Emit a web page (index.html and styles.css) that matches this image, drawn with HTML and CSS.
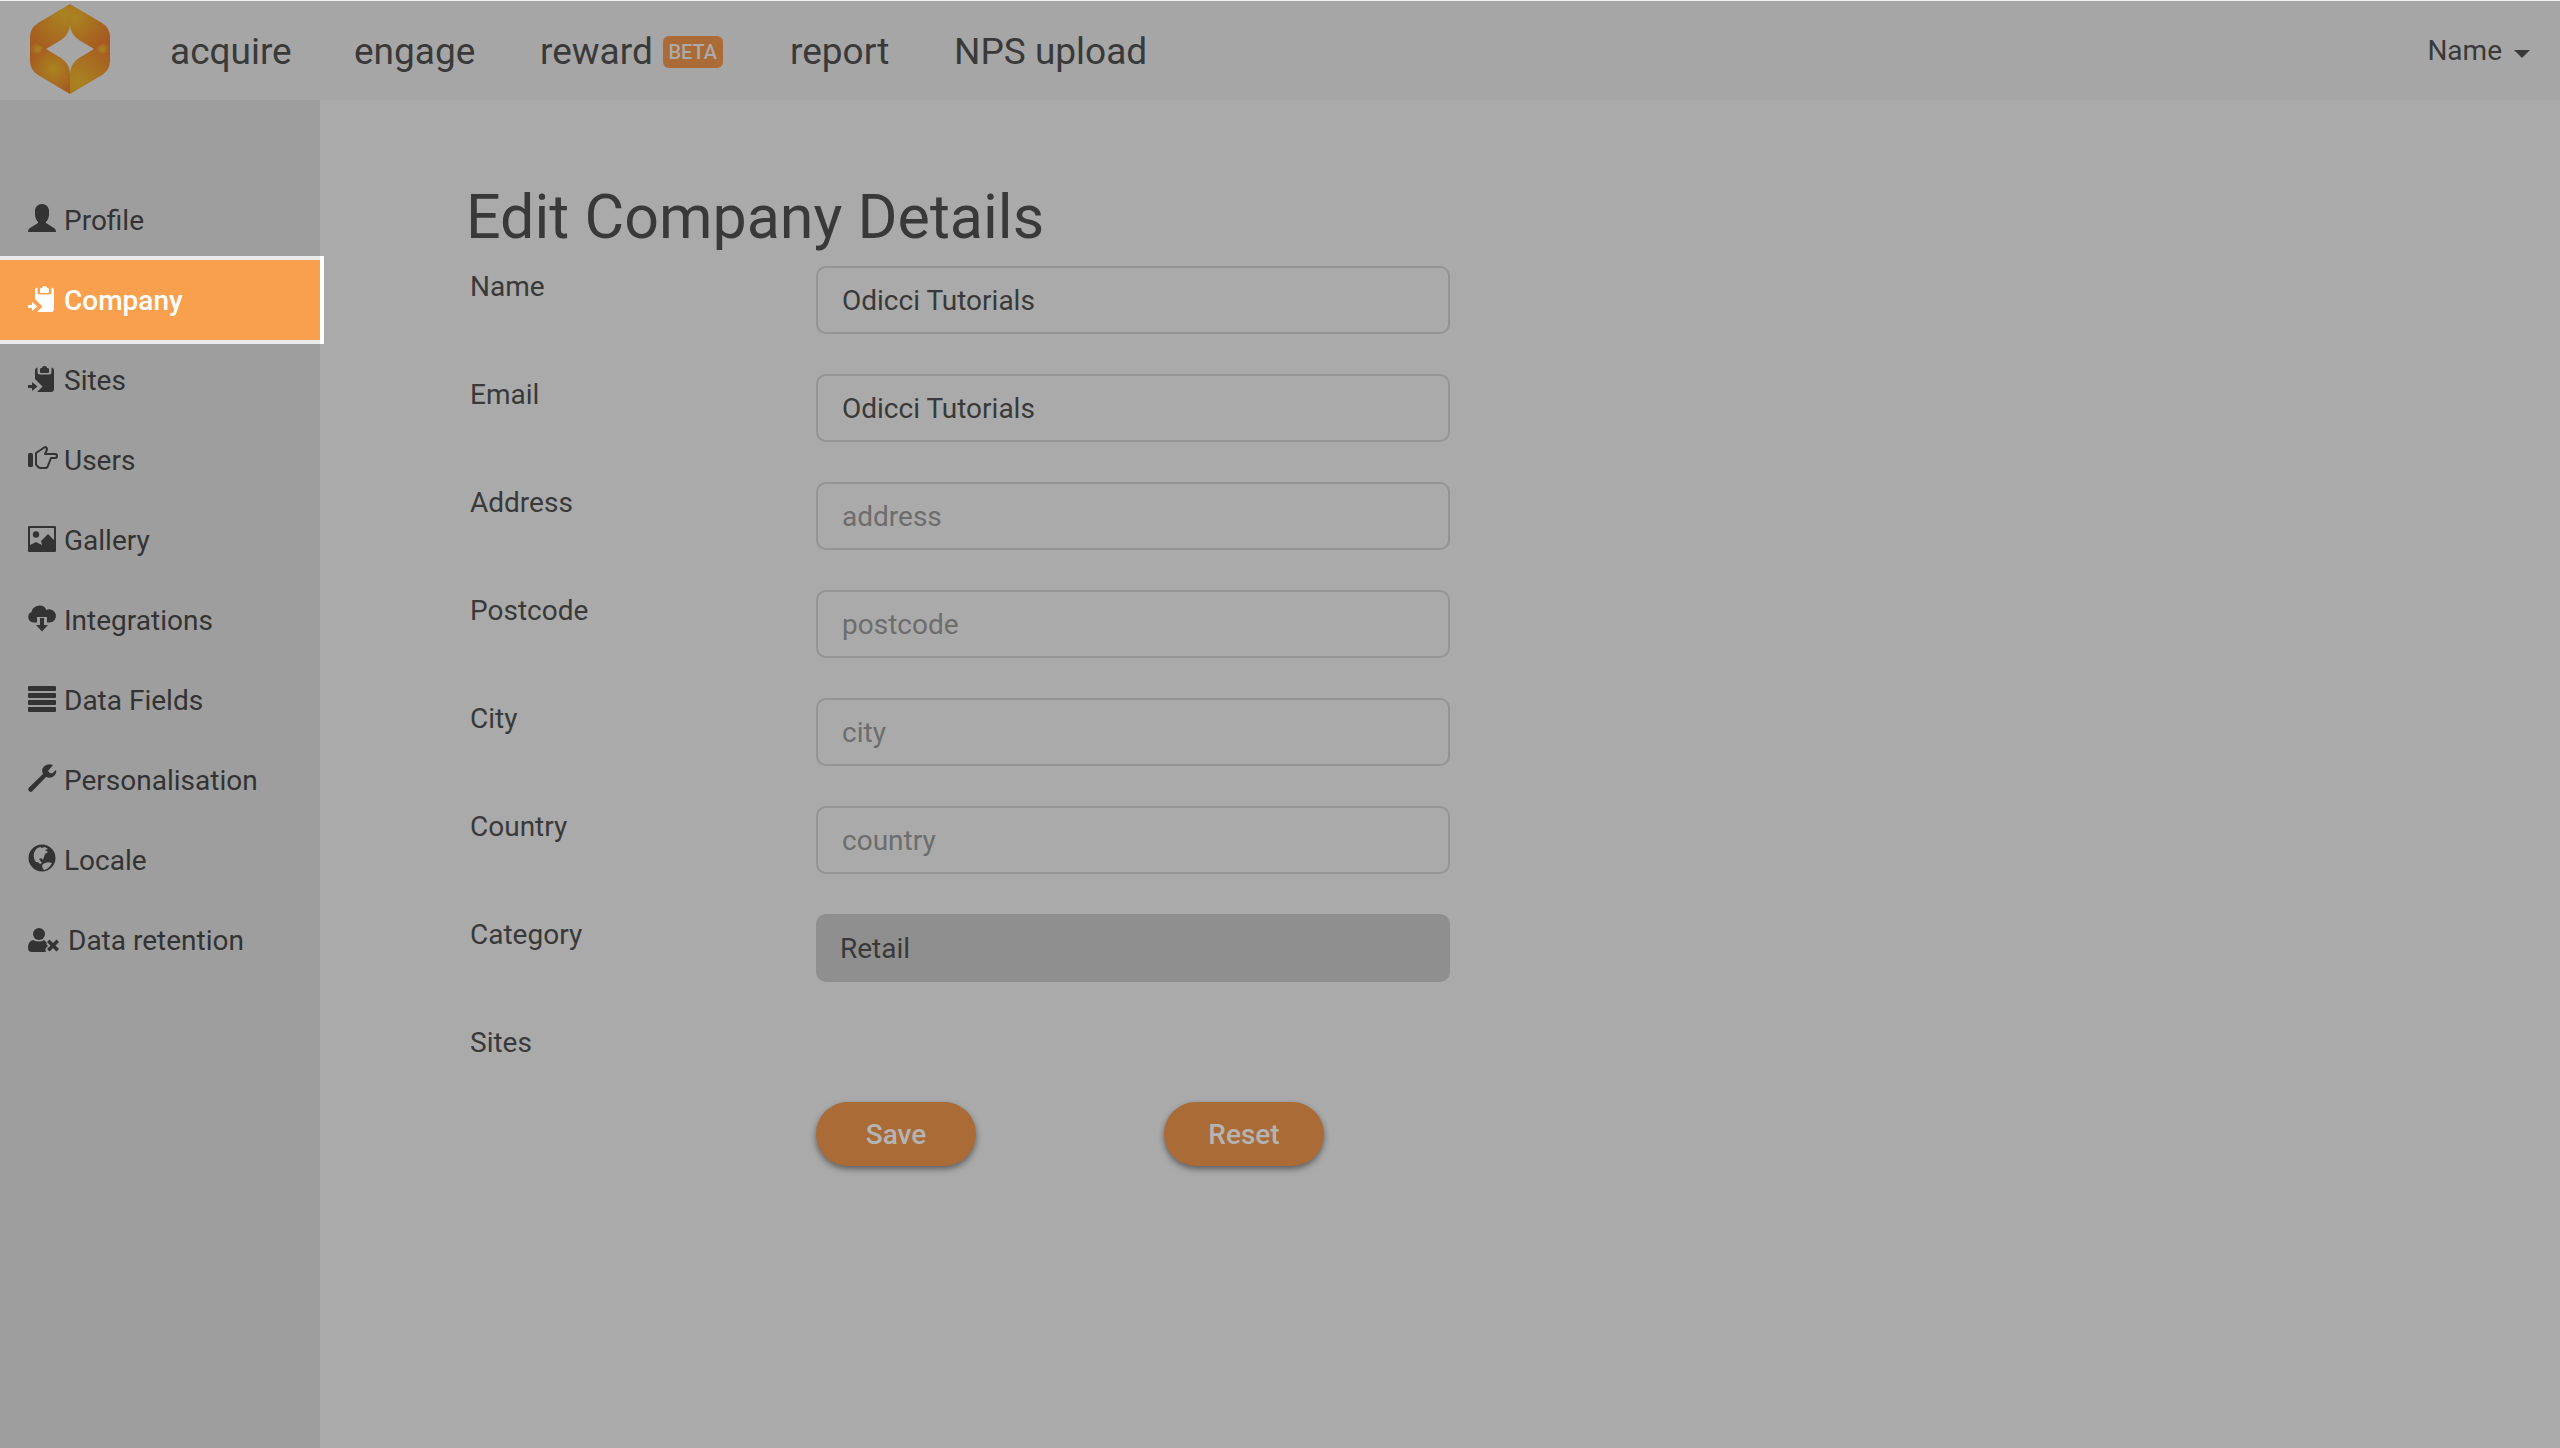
FILE: index.html
```html
<!DOCTYPE html>
<html lang="en">
<head>
<meta charset="utf-8">
<title>Edit Company Details</title>
<link rel="stylesheet" href="styles.css">
</head>
<body>
<header class="topbar">
  <a class="logo" href="#" aria-label="Home">
    <svg width="80" height="90" viewBox="0 0 80 90">
      <defs>
        <radialGradient id="g1" gradientUnits="userSpaceOnUse" cx="34" cy="11" r="42"><stop offset="0" stop-color="#a98420"/><stop offset="1" stop-color="#a65b21"/></radialGradient>
        <radialGradient id="g2" gradientUnits="userSpaceOnUse" cx="45" cy="13" r="42"><stop offset="0" stop-color="#a98420"/><stop offset="1" stop-color="#a65621"/></radialGradient>
        <radialGradient id="g3" gradientUnits="userSpaceOnUse" cx="23" cy="65" r="28"><stop offset="0" stop-color="#a98420"/><stop offset="1" stop-color="#a65621"/></radialGradient>
        <radialGradient id="g4" gradientUnits="userSpaceOnUse" cx="48" cy="78" r="50"><stop offset="0" stop-color="#a98420"/><stop offset="1" stop-color="#a65621"/></radialGradient>
        <radialGradient id="g5" gradientUnits="userSpaceOnUse" cx="8" cy="45" r="8"><stop offset="0" stop-color="#a98420"/><stop offset="1" stop-color="#a65621"/></radialGradient>
        <radialGradient id="g6" gradientUnits="userSpaceOnUse" cx="72" cy="45" r="8"><stop offset="0" stop-color="#a98420"/><stop offset="1" stop-color="#a65621"/></radialGradient>
      </defs>
      <path fill="url(#g1)" d="M40 0L8 19Q0 24 0 33V45H16L31 36Q40 30 40 20Z"/>
      <path fill="url(#g2)" d="M40 0L72 19Q80 24 80 33V45H64L49 36Q40 30 40 20Z"/>
      <path fill="url(#g3)" d="M40 90L8 71Q0 66 0 57V45H16L31 54Q40 60 40 70Z"/>
      <path fill="url(#g4)" d="M40 90L72 71Q80 66 80 57V45H64L49 54Q40 60 40 70Z"/>
      <path fill="url(#g5)" d="M0 39L6 39L16 45L6 51L0 51Z"/>
      <path fill="url(#g6)" d="M80 39L74 39L64 45L74 51L80 51Z"/>
    </svg>
  </a>
  <nav class="mainnav">
    <a href="#">acquire</a>
    <a href="#">engage</a>
    <a href="#">reward<span class="badge">BETA</span></a>
    <a href="#">report</a>
    <a href="#">NPS upload</a>
  </nav>
  <button class="account" type="button">Name<span class="caret"></span></button>
</header>
<div class="layout">
  <nav class="sidebar">
    <a href="#"><svg class="icon" viewBox="0 0 28 28"><path d="M14 0C18 0 21 3 21 7V10C21 13 20 16 18 18V19L26 24Q28 25 28 28H0Q0 25 2 24L10 19V18C8 16 7 13 7 10V7C7 3 10 0 14 0Z"/></svg>Profile</a>
    <a href="#" class="active"><svg class="icon" viewBox="0 0 28 28"><path d="M7 6Q7 4 9.500 3.500V8Q9.500 10.500 12 10.500H21Q23.500 10.500 23.500 8V3.500Q26 4 26 6V25Q26 28 23 28H9L14.500 22.500L7 15Z"/><path d="M12 8V5Q12 4 14 4Q14 2 16.500 2Q19 2 19 4Q21 4 21 5V8Q21 9 20 9H13Q12 9 12 8Z"/><path d="M0 21H4V18L9.500 22.500L4 27V24H0Z"/></svg>Company</a>
    <a href="#"><svg class="icon" viewBox="0 0 28 28"><path d="M7 6Q7 4 9.500 3.500V8Q9.500 10.500 12 10.500H21Q23.500 10.500 23.500 8V3.500Q26 4 26 6V25Q26 28 23 28H9L14.500 22.500L7 15Z"/><path d="M12 8V5Q12 4 14 4Q14 2 16.500 2Q19 2 19 4Q21 4 21 5V8Q21 9 20 9H13Q12 9 12 8Z"/><path d="M0 21H4V18L9.500 22.500L4 27V24H0Z"/></svg>Sites</a>
    <a href="#"><svg class="icon" viewBox="0 0 28 28"><rect x="0" y="9" width="5" height="14" rx="1.500"/><path class="line" d="M8 9L17 3Q19 3 19 5.500L17 10H27Q29 10 29 12Q29 14 27 14H23L19.500 23Q19 24 17 24H12Q11 24 8 20.500Z"/></svg>Users</a>
    <a href="#"><svg class="icon" viewBox="0 0 28 28"><path fill-rule="evenodd" d="M1 2H27Q28 2 28 3V27Q28 28 27 28H1Q0 28 0 27V3Q0 2 1 2ZM2 4V21L8 18L14 21L13 17L20 10L26 16V4Z"/><circle cx="8" cy="10.500" r="3.200"/></svg>Gallery</a>
    <a href="#"><svg class="icon" viewBox="0 0 28 28"><path d="M9 18.500H5.500A5.500 5.500 0 0 1 3.500 8A8 8 0 0 1 18.500 6A6.600 6.600 0 1 1 22 18.500H19V13H9Z"/><path d="M12 14H16V21H20L14 27.500L8 21H12Z"/></svg>Integrations</a>
    <a href="#"><svg class="icon" viewBox="0 0 28 28"><rect x="0" y="2" width="28" height="5" rx="1"/><rect x="0" y="9" width="28" height="5" rx="1"/><rect x="0" y="16" width="28" height="5" rx="1"/><rect x="0" y="23" width="28" height="5" rx="1"/></svg>Data Fields</a>
    <a href="#"><svg class="icon" viewBox="0 0 28 28"><path d="M25 1Q19 -1 15.500 3Q13 6 15 10L0.500 24Q-0.500 25.500 1 27Q2.500 28.500 4 27.500L18 13Q23 15 26 12Q29 9 28 6L24 9.500Q21 9 20 7Z"/></svg>Personalisation</a>
    <a href="#"><svg class="icon" viewBox="0 0 28 28"><path fill-rule="evenodd" d="M14 0.500A13.500 13.500 0 1 1 14 27.500A13.500 13.500 0 1 1 14 0.500ZM13 3Q8 3 6 9Q5 15 8 18Q11 18 12 20L14 19L11 15Q14 13 15 16L17 10L20 8L17 6L20 5L17 3L13 4ZM14 21Q18 17 24 19Q21 25 16 26Q14 24 14 21Z"/></svg>Locale</a>
    <a href="#"><svg class="icon wide" viewBox="0 0 32 28"><circle cx="11" cy="10" r="6"/><path d="M5 16Q8 17.500 11 17.500Q14 17.500 16 16L19 19Q17.500 20 20 22Q16 25 18 28H4Q0 28 0 24Q0 17 5 16Z"/><path d="M19 18L21.500 15.500L25 19L28.500 15.500L31 18L27.500 21.500L31 25L28.500 27.500L25 24L21.500 27.500L19 25L22.500 21.500Z"/></svg>Data retention</a>
  </nav>
  <main class="content">
    <h1>Edit Company Details</h1>
    <form class="form">
      <label for="name">Name</label><input id="name" type="text" value="Odicci Tutorials">
      <label for="email">Email</label><input id="email" type="text" value="Odicci Tutorials">
      <label for="address">Address</label><input id="address" type="text" placeholder="address">
      <label for="postcode">Postcode</label><input id="postcode" type="text" placeholder="postcode">
      <label for="city">City</label><input id="city" type="text" placeholder="city">
      <label for="country">Country</label><input id="country" type="text" placeholder="country">
      <label for="category">Category</label><select id="category"><option>Retail</option></select>
      <span class="label">Sites</span>
      <div class="actions">
        <button class="btn" type="submit">Save</button>
        <button class="btn" type="reset">Reset</button>
      </div>
    </form>
  </main>
</div>
</body>
</html>
```
FILE: styles.css
```css
* { box-sizing: border-box; }
body {
  margin: 0;
  min-height: 100vh;
  display: flex;
  flex-direction: column;
  background: #aaaaaa;
  color: #393939;
  font: 28px/42px Roboto, "Liberation Sans", sans-serif;
}
a { color: inherit; text-decoration: none; }
input, select, button { font: inherit; color: inherit; }

.topbar {
  display: flex;
  align-items: center;
  height: 100px;
  padding: 0 30px;
  border-top: 1px solid #f2f2f2;
  background: #a6a6a6;
}
.logo { display: flex; width: 140px; padding-bottom: 4px; }
.mainnav {
  display: grid;
  grid-template-columns: 184px 186px 250px 164px auto;
  padding-top: 2px;
  font-size: 37px;
}
.mainnav a { display: flex; align-items: center; white-space: nowrap; }
.badge {
  margin-left: 10px;
  width: 60px;
  border-radius: 6px;
  background: #aa6b36;
  color: #aaaaaa;
  font-size: 20px;
  font-weight: 500;
  line-height: 32px;
  text-align: center;
}
.account {
  display: flex;
  align-items: center;
  gap: 12px;
  margin-left: auto;
  padding: 0;
  border: 0;
  background: none;
}
.caret {
  border: 8px solid transparent;
  border-top-color: #393939;
  border-bottom: 0;
  margin-top: 6px;
}

.layout { display: flex; flex: 1; }
.sidebar {
  flex: none;
  width: 320px;
  padding-top: 80px;
  background: #9e9e9e;
  color: #333333;
}
.sidebar a {
  display: flex;
  align-items: center;
  gap: 8px;
  height: 80px;
  padding: 2px 0 0 28px;
}
.sidebar .active {
  background: #f9a04e;
  color: #ffffff;
  font-weight: 500;
  box-shadow: 4px 0 #ffffff, 0 -4px #ebebeb, 0 4px #ebebeb, 4px -4px #ffffff, 4px 4px #ffffff;
}
.icon { width: 28px; height: 28px; margin-bottom: 6px; fill: currentColor; overflow: visible; }
.icon.wide { width: 32px; }
.line { fill: none; stroke: currentColor; stroke-width: 2; stroke-linejoin: round; }

.content { flex: 1; padding: 84px 146px; }
h1 {
  margin: 0 0 16px;
  font-size: 61px;
  font-weight: 400;
  line-height: 66px;
}
.form {
  display: grid;
  grid-template-columns: 346px minmax(0, 634px);
  row-gap: 40px;
  padding-left: 4px;
}
.form label, .label { height: 68px; }
.form input, .form select {
  width: 100%;
  height: 68px;
  padding: 0 24px;
  border: 2px solid #949494;
  border-radius: 10px;
  background: #aaaaaa;
}
.form input::placeholder { color: #6d6d6d; opacity: 1; }
.form select {
  appearance: none;
  padding: 2px 22px 0;
  border-color: #8f8f8f;
  background: #8f8f8f;
}
.actions {
  display: flex;
  gap: 188px;
  padding-top: 80px;
}
.btn {
  width: 160px;
  height: 64px;
  padding: 2px 0 0;
  border: 0;
  border-radius: 32px;
  background: #aa6b36;
  color: #b4b4b4;
  font-weight: 500;
  box-shadow: 0 3px 6px rgba(0, 0, 0, 0.45);
}
```
